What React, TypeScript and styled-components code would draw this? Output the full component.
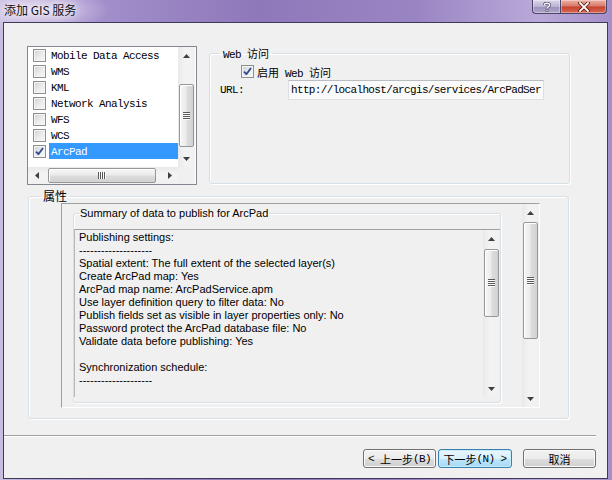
import React from 'react';
import styled, { createGlobalStyle } from 'styled-components';

const MONO = `"Liberation Mono", "Noto Sans CJK SC", monospace`;
const SANS = `"Liberation Sans", Arial, sans-serif`;
const CJK = `"Noto Sans CJK SC", "Liberation Sans", sans-serif`;

const GlobalStyle = createGlobalStyle`
  html, body { margin: 0; padding: 0; width: 612px; height: 480px; overflow: hidden; background: #f0f0f0; }
  * { box-sizing: border-box; }
`;

const Frame = styled.div`
  width: 612px;
  height: 480px;
  display: flex;
  flex-direction: column;
  background:
    radial-gradient(ellipse 70px 22px at 40px 10px, rgba(235, 228, 246, 0.85), rgba(235, 228, 246, 0) 100%),
    linear-gradient(90deg, #c8bce0 0%, #a491cc 14%, #8f78ba 42%, #9a85c3 68%, #b9a9d8 88%, #a58fc9 100%);
`;

const TitleBar = styled.div`
  height: 22px;
  flex: none;
  display: flex;
  align-items: flex-start;
`;

const TitleText = styled.div`
  padding-left: 4px;
  line-height: 20px;
  font-family: ${CJK};
  font-size: 12px;
  color: #111;
  text-shadow: 0 0 6px rgba(255, 255, 255, 0.9), 0 0 10px rgba(255, 255, 255, 0.7);
`;

const CaptionButtons = styled.div`
  margin-left: auto;
  margin-right: 5px;
  display: flex;
  height: 14px;
`;

const CaptionBtn = styled.div<{ $kind: 'help' | 'close' }>`
  height: 14px;
  width: ${(p) => (p.$kind === 'help' ? 28 : 47)}px;
  display: flex;
  align-items: center;
  justify-content: center;
  border: 1px solid #4b4468;
  border-top: none;
  ${(p) => (p.$kind === 'help' ? 'border-right: none;' : '')}
  border-radius: ${(p) => (p.$kind === 'help' ? '0 0 0 4px' : '0 0 4px 0')};
  background: ${(p) =>
    p.$kind === 'help'
      ? 'linear-gradient(#dcd6ea 0%, #bcb2d2 50%, #9c91b9 52%, #b0a6cb 100%)'
      : 'linear-gradient(#eab0a2 0%, #d9786a 48%, #c4412f 52%, #d9694e 100%)'};
  box-shadow: inset 0 0 0 1px rgba(255, 255, 255, 0.35);
`;

const Client = styled.div`
  margin: 0 4px 0 3px;
  height: 457px;
  border: 1px solid #3f3a58;
  background: #f0f0f0;
  display: flex;
  flex-direction: column;
`;

const TopRow = styled.div`
  display: flex;
  align-items: flex-start;
  margin-top: 23px;
  padding-left: 23px;
`;

const ListBox = styled.div`
  width: 170px;
  height: 139px;
  border: 1px solid #828790;
  background: #fff;
  display: grid;
  grid-template-columns: 150px 17px;
  grid-template-rows: 120px 17px;
`;

const ListRows = styled.div`
  display: flex;
  flex-direction: column;
  overflow: hidden;
`;

const ListRow = styled.div`
  height: 16px;
  display: flex;
  align-items: center;
  padding-left: 5px;
`;

const ListLabel = styled.div<{ $selected?: boolean }>`
  flex: 1;
  margin-left: 3px;
  padding-left: 2px;
  height: 16px;
  line-height: 18px;
  overflow: hidden;
  font-family: ${MONO};
  font-size: 11px;
  letter-spacing: -0.6px;
  white-space: nowrap;
  color: ${(p) => (p.$selected ? '#fff' : '#000')};
  background: ${(p) => (p.$selected ? '#3399ff' : 'transparent')};
  outline: ${(p) => (p.$selected ? '1px dotted #c8782c' : 'none')};
  outline-offset: -1px;
`;

const Corner = styled.div`
  background: #f0f0f0;
`;

const CheckBox = styled.span`
  width: 13px;
  height: 13px;
  flex: none;
  display: inline-flex;
  align-items: center;
  justify-content: center;
  border: 1px solid #8e8f8f;
  background: linear-gradient(135deg, #cfd0d2 0%, #eeeeef 60%, #f9f9f9 100%);
  box-shadow: inset 0 0 0 1px #f4f4f4;
`;

const VBar = styled.div<{ $h: number }>`
  width: 17px;
  height: ${(p) => p.$h}px;
  flex: none;
  display: flex;
  flex-direction: column;
  background: linear-gradient(90deg, #e9e9e9 0%, #f3f3f3 40%, #f1f1f1 100%);
`;

const HBar = styled.div<{ $w: number }>`
  height: 17px;
  width: ${(p) => p.$w}px;
  display: flex;
  flex-direction: row;
  background: linear-gradient(180deg, #e9e9e9 0%, #f3f3f3 40%, #f1f1f1 100%);
`;

const ArrowBtn = styled.div`
  width: 17px;
  height: 17px;
  flex: none;
  display: flex;
  align-items: center;
  justify-content: center;
`;

const Track = styled.div`
  flex: 1;
  display: flex;
  min-width: 0;
  min-height: 0;
`;

const VThumb = styled.div<{ $top: number; $h: number }>`
  margin-top: ${(p) => p.$top}px;
  height: ${(p) => p.$h}px;
  width: 15px;
  margin-left: 1px;
  border: 1px solid #979797;
  border-radius: 2px;
  background: linear-gradient(90deg, #f6f6f6 0%, #ececec 45%, #dcdcdc 55%, #d2d2d2 100%);
  box-shadow: inset 1px 1px 0 #fff;
  display: flex;
  align-items: center;
  justify-content: center;
`;

const HThumb = styled.div<{ $left: number; $w: number }>`
  margin-left: ${(p) => p.$left}px;
  width: ${(p) => p.$w}px;
  height: 15px;
  margin-top: 1px;
  border: 1px solid #979797;
  border-radius: 2px;
  background: linear-gradient(180deg, #f6f6f6 0%, #ececec 45%, #dcdcdc 55%, #d2d2d2 100%);
  box-shadow: inset 1px 1px 0 #fff;
  display: flex;
  align-items: center;
  justify-content: center;
`;

const Arrow = ({ dir }: { dir: 'up' | 'down' | 'left' | 'right' }) => {
  const pts: Record<string, string> = {
    up: '3.5,0 7,4 0,4',
    down: '0,0 7,0 3.5,4',
    left: '4,0 4,7 0,3.5',
    right: '0,0 4,3.5 0,7',
  };
  const vertical = dir === 'up' || dir === 'down';
  return (
    <svg width={vertical ? 7 : 4} height={vertical ? 4 : 7} viewBox={vertical ? '0 0 7 4' : '0 0 4 7'}>
      <polygon points={pts[dir]} fill="#404040" />
    </svg>
  );
};

const Grip = ({ vertical }: { vertical: boolean }) =>
  vertical ? (
    <svg width="7" height="8" viewBox="0 0 7 8">
      {[0, 2, 4, 6].map((y) => (
        <g key={y}>
          <rect x="0" y={y} width="7" height="1" fill="#5a5a5a" />
          <rect x="0" y={y + 1} width="7" height="1" fill="#ffffff" opacity="0.8" />
        </g>
      ))}
    </svg>
  ) : (
    <svg width="8" height="7" viewBox="0 0 8 7">
      {[0, 2, 4, 6].map((x) => (
        <g key={x}>
          <rect x={x} y="0" width="1" height="7" fill="#5a5a5a" />
          <rect x={x + 1} y="0" width="1" height="7" fill="#ffffff" opacity="0.8" />
        </g>
      ))}
    </svg>
  );

const VScroll = ({ height, top, size }: { height: number; top: number; size: number }) => (
  <VBar $h={height}>
    <ArrowBtn>
      <Arrow dir="up" />
    </ArrowBtn>
    <Track>
      <VThumb $top={top} $h={size}>
        <Grip vertical />
      </VThumb>
    </Track>
    <ArrowBtn>
      <Arrow dir="down" />
    </ArrowBtn>
  </VBar>
);

const HScroll = ({ width, left, size }: { width: number; left: number; size: number }) => (
  <HBar $w={width}>
    <ArrowBtn>
      <Arrow dir="left" />
    </ArrowBtn>
    <Track>
      <HThumb $left={left} $w={size}>
        <Grip vertical={false} />
      </HThumb>
    </Track>
    <ArrowBtn>
      <Arrow dir="right" />
    </ArrowBtn>
  </HBar>
);

const Check = ({ checked }: { checked?: boolean }) => (
  <CheckBox>
    {checked && (
      <svg width="9" height="9" viewBox="0 0 9 9">
        <path d="M1 4.6 L3.4 7.2 L8 1" fill="none" stroke="#2b4a8f" strokeWidth="1.8" strokeLinejoin="round" />
      </svg>
    )}
  </CheckBox>
);

const Group = styled.fieldset<{ $w: number; $h?: number }>`
  margin: 0;
  padding: 0;
  min-width: 0;
  width: ${(p) => p.$w}px;
  ${(p) => (p.$h ? `height: ${p.$h}px;` : '')}
  border: 1px solid #d5dfe5;
  border-radius: 3px;
  box-shadow: inset 1px 1px 0 #fff, 1px 1px 0 #fff;
`;

const Legend = styled.legend<{ $indent: number; $font: 'mono' | 'cjk' | 'sans' }>`
  margin-left: ${(p) => p.$indent}px;
  padding: 0 ${(p) => (p.$font === 'sans' ? 1 : p.$font === 'cjk' ? 2 : 3)}px;
  height: 14px;
  line-height: 14px;
  color: #000;
  font-family: ${(p) => (p.$font === 'mono' ? MONO : p.$font === 'cjk' ? CJK : SANS)};
  font-size: ${(p) => (p.$font === 'cjk' ? 12 : 11)}px;
  letter-spacing: ${(p) => (p.$font === 'mono' ? '-0.6px' : '0')};
  white-space: nowrap;
`;

const WebGroup = styled(Group)`
  margin-left: 12px;
`;

const MonoText = styled.span`
  font-family: ${MONO};
  font-size: 11px;
  letter-spacing: -0.6px;
  color: #000;
  white-space: nowrap;
`;

const Han = styled.span`
  font-family: ${CJK};
  font-size: 11px;
  letter-spacing: 0;
`;

const EnableRow = styled.div`
  margin-top: 5px;
  margin-left: 31px;
  height: 13px;
  display: flex;
  align-items: center;
  gap: 3px;
`;

const UrlRow = styled.div`
  margin-top: 2px;
  height: 20px;
  display: flex;
  align-items: center;
`;

const UrlLabel = styled(MonoText)`
  margin-left: 10px;
  width: 68px;
`;

const TextBox = styled.div`
  width: 256px;
  height: 20px;
  border: 1px solid #dcdfe3;
  border-top-color: #b9bcc1;
  background: #fafafa;
  padding-left: 2px;
  line-height: 18px;
  overflow: hidden;
  font-family: ${MONO};
  font-size: 11px;
  letter-spacing: -0.65px;
  white-space: nowrap;
  color: #000;
`;

const PropsGroup = styled(Group)`
  margin-top: 4px;
  margin-left: 24px;
  padding-bottom: 10px;
`;

const Panel = styled.div`
  margin-left: 32px;
  width: 479px;
  height: 205px;
  border-top: 1px solid #a0a0a0;
  border-left: 1px solid #a0a0a0;
  border-right: 1px solid #ffffff;
  border-bottom: 1px solid #ffffff;
  display: flex;
`;

const PanelBody = styled.div`
  flex: 1;
  min-width: 0;
`;

const SummaryGroup = styled(Group)`
  margin-top: 2px;
  margin-left: 11px;
  padding-bottom: 5px;
`;

const SummaryBox = styled.div`
  margin-top: 9px;
  height: 168px;
  border-top: 1px solid #a0a0a0;
  border-left: 1px solid #b8b8b8;
  display: flex;
`;

const SummaryText = styled.div`
  flex: 1;
  min-width: 0;
  padding: 1px 0 0 4px;
  overflow: hidden;
`;

const Line = styled.div`
  height: 13px;
  line-height: 13px;
  font-family: ${SANS};
  font-size: 11px;
  color: #000;
  white-space: nowrap;
`;

const Separator = styled.div`
  margin-top: 16px;
  margin-right: 11px;
  height: 2px;
  border-top: 1px solid #a0a0a0;
  border-bottom: 1px solid #ffffff;
`;

const ButtonRow = styled.div`
  margin-top: 12px;
  padding-right: 11px;
  display: flex;
  justify-content: flex-end;
`;

const Button = styled.div<{ $w: number; $default?: boolean; $gap: number }>`
  width: ${(p) => p.$w}px;
  height: 19px;
  margin-left: ${(p) => p.$gap}px;
  border: 1px solid ${(p) => (p.$default ? '#3c7fb1' : '#707070')};
  border-radius: 3px;
  background: ${(p) =>
    p.$default
      ? 'linear-gradient(#eaf6fd 0%, #d9f0fc 50%, #bee6fd 51%, #a7d9f5 100%)'
      : 'linear-gradient(#f2f2f2 0%, #ebebeb 50%, #dddddd 51%, #cfcfcf 100%)'};
  box-shadow: inset 0 0 0 1px ${(p) => (p.$default ? '#c4ecfb' : '#fbfbfb')};
  display: flex;
  align-items: center;
  justify-content: center;
  font-family: ${MONO};
  font-size: 11px;
  letter-spacing: -0.6px;
  white-space: pre;
  color: #000;
`;

const listItems = ['Mobile Data Access', 'WMS', 'KML', 'Network Analysis', 'WFS', 'WCS', 'ArcPad'];

const summaryLines = [
  'Publishing settings:',
  '--------------------',
  'Spatial extent: The full extent of the selected layer(s)',
  'Create ArcPad map: Yes',
  'ArcPad map name: ArcPadService.apm',
  'Use layer definition query to filter data: No',
  'Publish fields set as visible in layer properties only: No',
  'Password protect the ArcPad database file: No',
  'Validate data before publishing: Yes',
  '',
  'Synchronization schedule:',
  '--------------------',
];

export default function App() {
  return (
    <>
      <GlobalStyle />
      <Frame>
        <TitleBar>
          <TitleText>添加 GIS 服务</TitleText>
          <CaptionButtons>
            <CaptionBtn $kind="help">
              <svg width="8" height="10" viewBox="0 0 8 10">
                <path
                  d="M1.3 3 C1.3 0.6 6.7 0.6 6.7 3 C6.7 4.6 4 4.8 4 6.6"
                  fill="none"
                  stroke="#3d3658"
                  strokeWidth="2.6"
                />
                <path d="M1.3 3 C1.3 0.6 6.7 0.6 6.7 3 C6.7 4.6 4 4.8 4 6.6" fill="none" stroke="#fff" strokeWidth="1.4" />
                <rect x="3" y="7.8" width="2" height="2" fill="#fff" stroke="#3d3658" strokeWidth="0.6" />
              </svg>
            </CaptionBtn>
            <CaptionBtn $kind="close">
              <svg width="12" height="10" viewBox="0 0 12 10">
                <path d="M2 1 L10 9 M10 1 L2 9" stroke="#5a1a12" strokeWidth="3.4" strokeLinecap="square" />
                <path d="M2 1 L10 9 M10 1 L2 9" stroke="#fff" strokeWidth="1.8" strokeLinecap="square" />
              </svg>
            </CaptionBtn>
          </CaptionButtons>
        </TitleBar>
        <Client>
          <TopRow>
            <ListBox>
              <ListRows>
                {listItems.map((item) => (
                  <ListRow key={item}>
                    <Check checked={item === 'ArcPad'} />
                    <ListLabel $selected={item === 'ArcPad'}>{item}</ListLabel>
                  </ListRow>
                ))}
              </ListRows>
              <VScroll height={120} top={20} size={63} />
              <HScroll width={150} left={3} size={108} />
              <Corner />
            </ListBox>
            <WebGroup $w={361} $h={138}>
              <Legend $indent={10} $font="mono">
                Web <Han>访问</Han>
              </Legend>
              <EnableRow>
                <Check checked />
                <MonoText>
                  <Han>启用</Han> Web <Han>访问</Han>
                </MonoText>
              </EnableRow>
              <UrlRow>
                <UrlLabel>URL:</UrlLabel>
                <TextBox>http://localhost/arcgis/services/ArcPadSer</TextBox>
              </UrlRow>
            </WebGroup>
          </TopRow>
          <PropsGroup $w={541}>
            <Legend $indent={12} $font="cjk">
              属性
            </Legend>
            <Panel>
              <PanelBody>
                <SummaryGroup $w={428}>
                  <Legend $indent={5} $font="sans">
                    Summary of data to publish for ArcPad
                  </Legend>
                  <SummaryBox>
                    <SummaryText>
                      {summaryLines.map((l, i) => (
                        <Line key={i}>{l}</Line>
                      ))}
                    </SummaryText>
                    <VScroll height={167} top={2} size={68} />
                  </SummaryBox>
                </SummaryGroup>
              </PanelBody>
              <VScroll height={203} top={1} size={117} />
            </Panel>
          </PropsGroup>
          <Separator />
          <ButtonRow>
            <Button $w={73} $gap={0}>
              {'< '}
              <Han>上一步</Han>(B)
            </Button>
            <Button $w={74} $gap={2} $default>
              <Han>下一步</Han>
              {'(N) >'}
            </Button>
            <Button $w={73} $gap={11}>
              <Han>取消</Han>
            </Button>
          </ButtonRow>
        </Client>
      </Frame>
    </>
  );
}
